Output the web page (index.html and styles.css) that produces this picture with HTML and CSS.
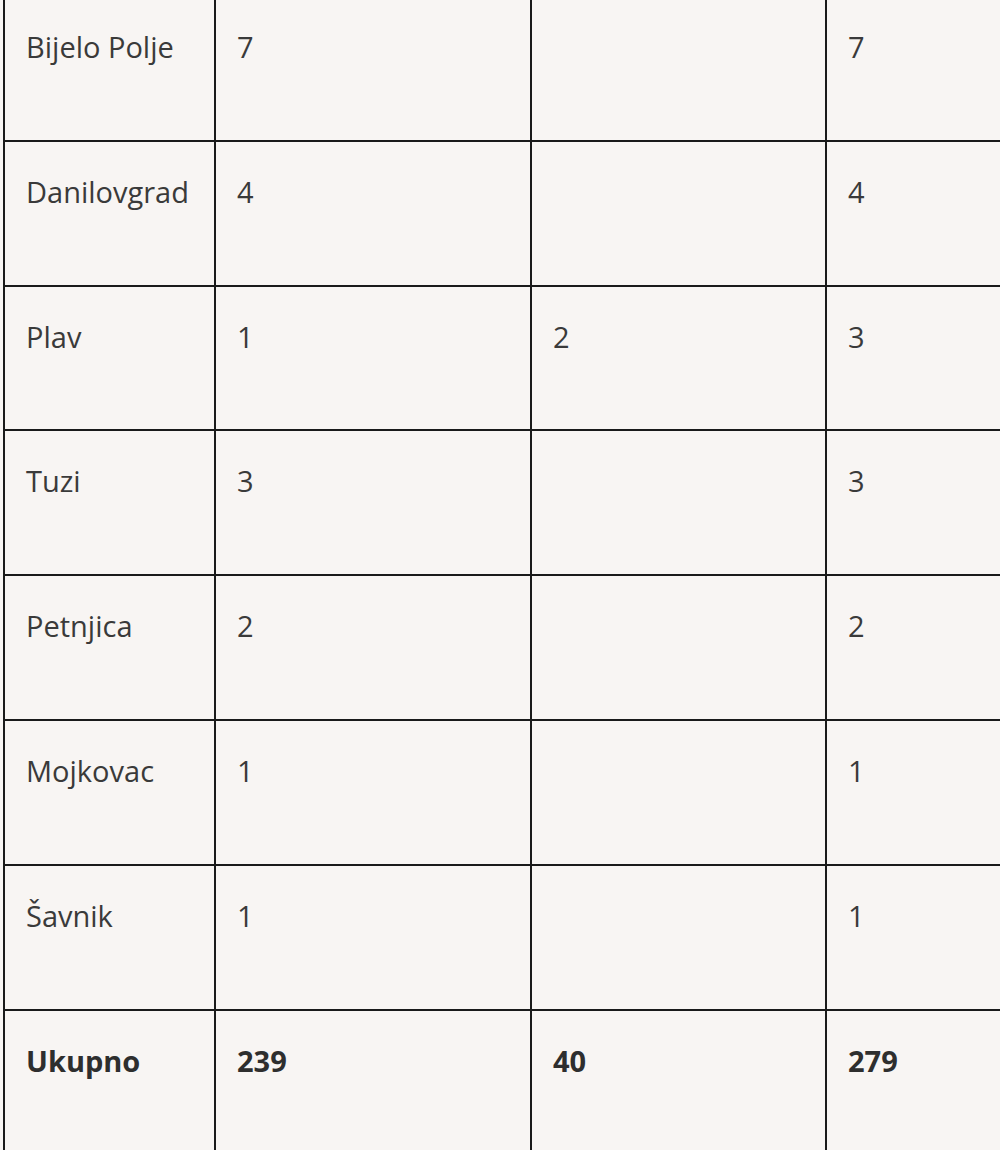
FILE: index.html
```html
<!DOCTYPE html>
<html lang="sr">
<head>
<meta charset="utf-8">
<title>Tabela</title>
<link rel="stylesheet" href="styles.css">
</head>
<body>
<div class="wrap">
<table class="data">
  <colgroup>
    <col class="c1"><col class="c2"><col class="c3"><col class="c4">
  </colgroup>
  <tbody>
    <tr><td>Bijelo Polje</td><td>7</td><td></td><td>7</td></tr>
    <tr><td>Danilovgrad</td><td>4</td><td></td><td>4</td></tr>
    <tr><td>Plav</td><td>1</td><td>2</td><td>3</td></tr>
    <tr><td>Tuzi</td><td>3</td><td></td><td>3</td></tr>
    <tr><td>Petnjica</td><td>2</td><td></td><td>2</td></tr>
    <tr><td>Mojkovac</td><td>1</td><td></td><td>1</td></tr>
    <tr><td>Šavnik</td><td>1</td><td></td><td>1</td></tr>
    <tr class="total"><td>Ukupno</td><td>239</td><td>40</td><td>279</td></tr>
  </tbody>
</table>
</div>
</body>
</html>
```

FILE: styles.css
```css
html, body {
  margin: 0;
  padding: 0;
  background: #f8f5f3;
  overflow: hidden;
}
.wrap {
  padding-left: 3px;
  margin-top: -5px;
  width: 1200px;
}
.data {
  border-collapse: collapse;
  table-layout: fixed;
  width: 1130px;
  font-family: "Open Sans", "Noto Sans", sans-serif;
  font-size: 29px;
  color: #3a3a3a;
}
.c1 { width: 211px; }
.c2 { width: 316px; }
.c3 { width: 295px; }
.c4 { width: 308px; }
.data td {
  border: 2px solid #1a1a1a;
  height: 144.8px;
  box-sizing: border-box;
  padding: 24px 20px 0 21px;
  vertical-align: top;
  line-height: 52px;
  white-space: nowrap;
}
.total td {
  font-weight: 700;
  color: #2e2e2e;
}
```
